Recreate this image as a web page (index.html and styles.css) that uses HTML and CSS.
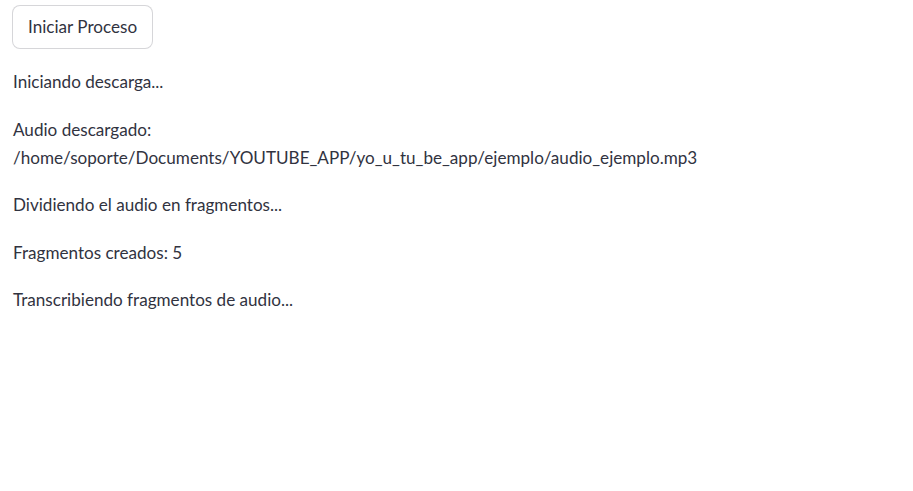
FILE: index.html
```html
<!DOCTYPE html>
<html lang="es">
<head>
<meta charset="utf-8">
<title>App</title>
<link rel="stylesheet" href="styles.css">
</head>
<body>
<main class="app">
  <div class="row"><button class="btn">Iniciar Proceso</button></div>
  <p class="msg">Iniciando descarga...</p>
  <p class="msg">Audio descargado:<br>/home/soporte/Documents/YOUTUBE_APP/yo_u_tu_be_app/ejemplo/audio_ejemplo.mp3</p>
  <p class="msg">Dividiendo el audio en fragmentos...</p>
  <p class="msg">Fragmentos creados: 5</p>
  <p class="msg">Transcribiendo fragmentos de audio...</p>
</main>
</body>
</html>
```
FILE: styles.css
```css
html, body {
  margin: 0;
  padding: 0;
  background: #ffffff;
}
body {
  font-family: "Lato", "Noto Sans", sans-serif;
  color: rgb(49, 51, 63);
  font-size: 17.1px;
  line-height: 28.2px;
}
.app {
  display: flex;
  flex-direction: column;
  gap: 19.2px;
  padding: 5px 13px 0 13px;
}
.row {
  display: flex;
}
.btn {
  font-family: inherit;
  font-size: 17.1px;
  color: rgb(49, 51, 63);
  background: #ffffff;
  border: 1px solid rgba(49, 51, 63, 0.2);
  border-radius: 8px;
  height: 44px;
  padding: 0 15px;
  margin-left: -1px;
  line-height: 28px;
}
.msg {
  margin: 0;
}
```
